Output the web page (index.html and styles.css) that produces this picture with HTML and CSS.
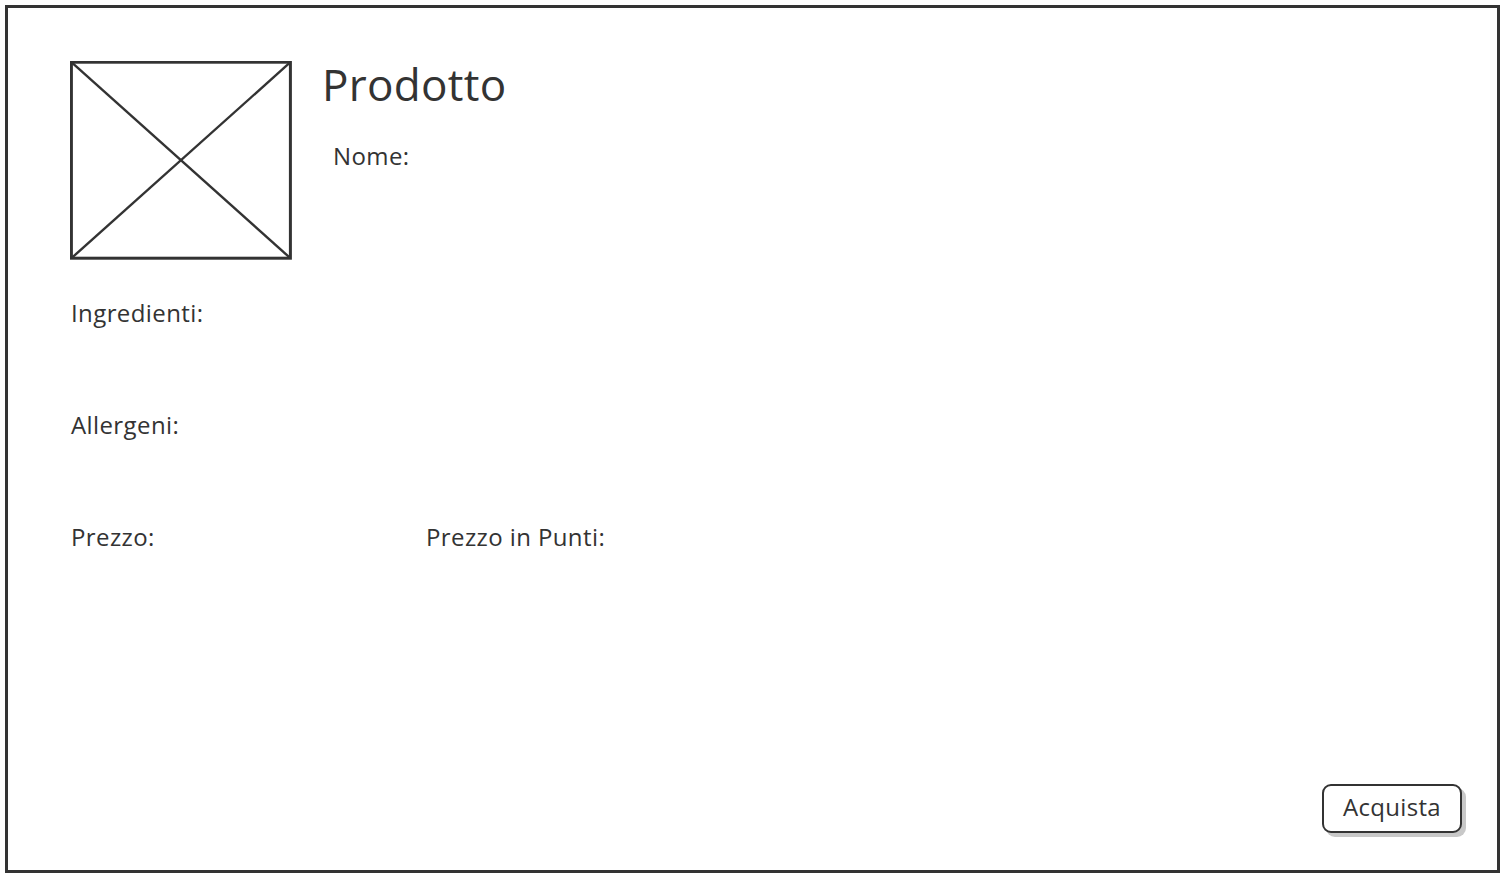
FILE: index.html
```html
<!DOCTYPE html>
<html lang="it">
<head>
<meta charset="utf-8">
<title>Prodotto</title>
<link rel="stylesheet" href="styles.css">
</head>
<body>
<div class="frame">
  <div class="top">
    <svg class="ph" width="222" height="199" viewBox="0 0 222 199">
      <rect x="1.4" y="1.2" width="219" height="196" fill="none" stroke="#333" stroke-width="3"/>
      <line x1="1.4" y1="1.2" x2="220.4" y2="197.2" stroke="#333" stroke-width="2.4"/>
      <line x1="220.4" y1="1.2" x2="1.4" y2="197.2" stroke="#333" stroke-width="2.4"/>
    </svg>
    <div class="head">
      <h1 class="title">Prodotto</h1>
      <div class="label nome">Nome:</div>
    </div>
  </div>
  <div class="label row first">Ingredienti:</div>
  <div class="label row">Allergeni:</div>
  <div class="label row prices"><span class="price">Prezzo:</span><span>Prezzo in Punti:</span></div>
  <div class="actions"><button class="btn">Acquista</button></div>
</div>
</body>
</html>
```

FILE: styles.css
```css
html, body {
  margin: 0;
  padding: 0;
  background: #fff;
}
body {
  font-family: "Open Sans", Lato, sans-serif;
  color: #333;
}
.frame {
  box-sizing: border-box;
  margin: 5px 4px 0 5px;
  width: 1495px;
  height: 868px;
  border: 3px solid #333;
  display: flex;
  flex-direction: column;
  padding: 53px 35px 37px 63px;
}
.top {
  display: flex;
  align-items: flex-start;
}
.ph {
  display: block;
  margin-left: -1px;
}
.head {
  margin-left: 30px;
  display: flex;
  flex-direction: column;
}
.title {
  margin: -4px 0 0 0;
  font-size: 44px;
  font-weight: 400;
  letter-spacing: 0.3px;
  line-height: 54px;
}
.label {
  font-size: 24px;
  letter-spacing: 0.4px;
  line-height: 28px;
}
.nome {
  margin: 31px 0 0 11px;
}
.row {
  height: 112px;
}
.first {
  margin-top: 39px;
}
.prices {
  display: flex;
}
.price {
  width: 355px;
}
.actions {
  margin-top: auto;
  display: flex;
  justify-content: flex-end;
}
.btn {
  box-sizing: border-box;
  width: 140px;
  height: 49px;
  border: 2.5px solid #333;
  border-radius: 9px;
  background: #fff;
  box-shadow: 4px 4px 0 #c8c8c8;
  font-family: "Open Sans", Lato, sans-serif;
  font-size: 24px;
  line-height: 28px;
  letter-spacing: 0.3px;
  color: #333;
  padding: 0 0 4px 0;
}
```
